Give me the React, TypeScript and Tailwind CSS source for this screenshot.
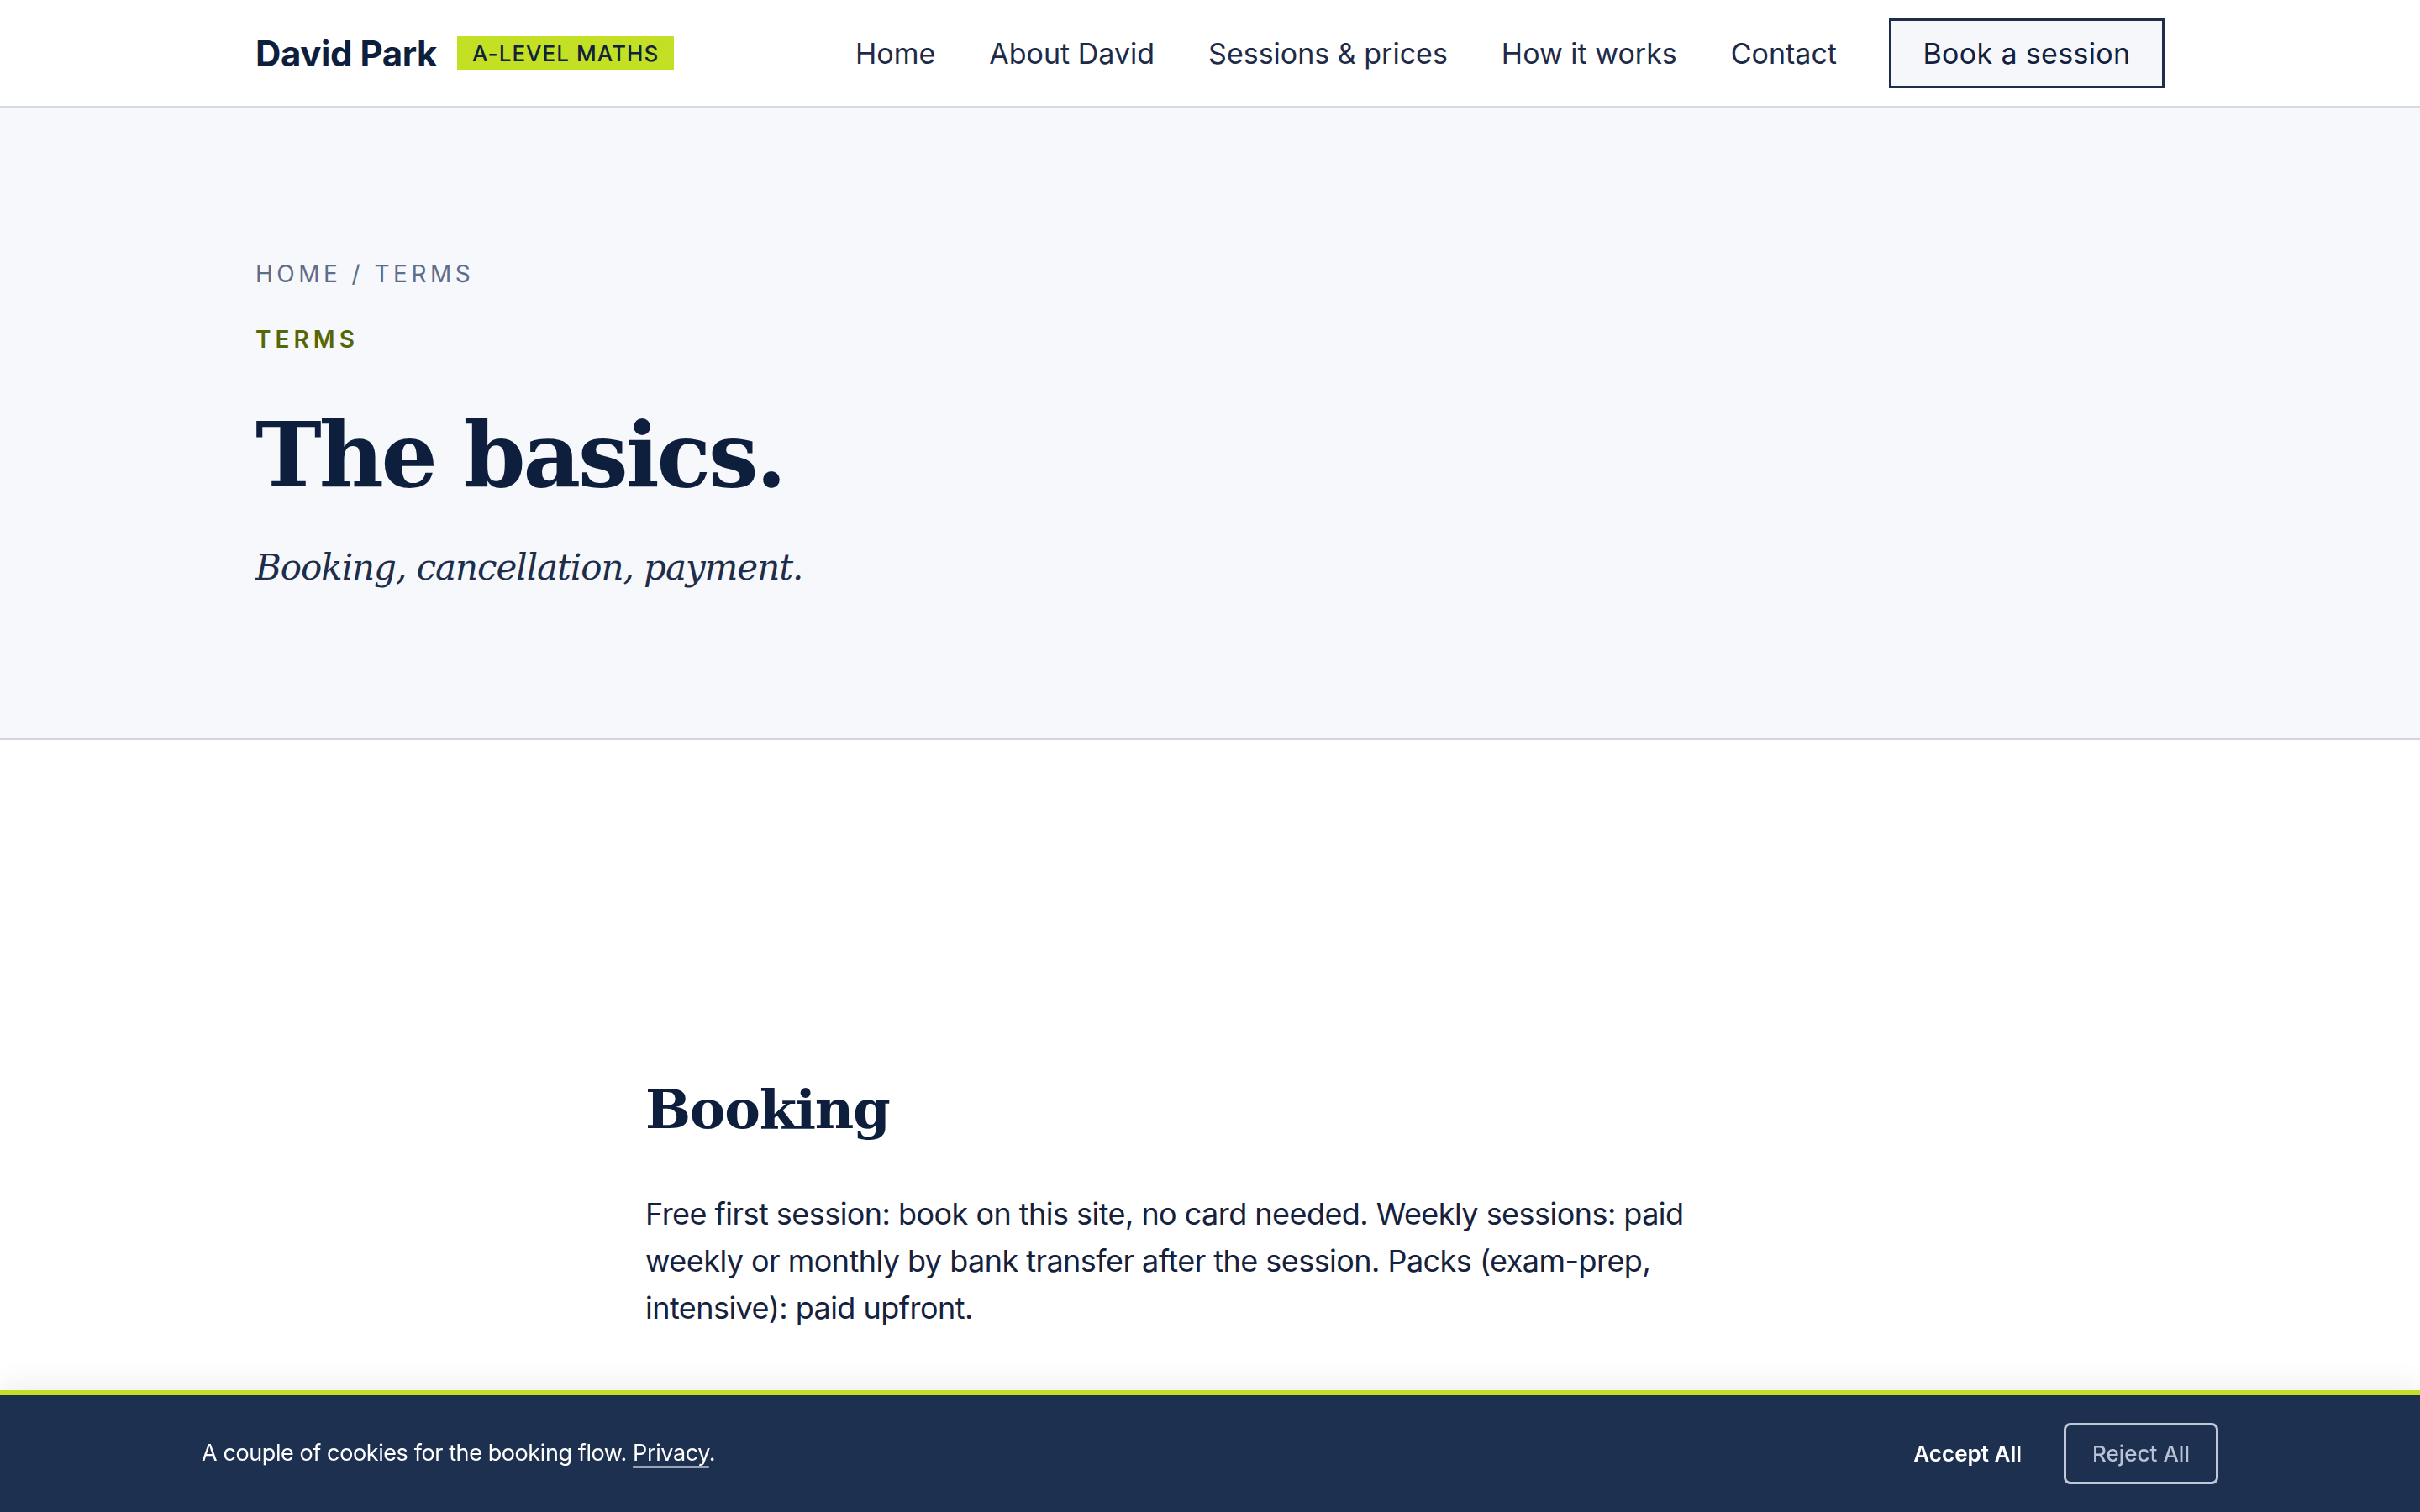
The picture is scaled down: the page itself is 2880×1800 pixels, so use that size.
const sans = { fontFamily: 'Inter, "Noto Sans", sans-serif' };
const slab = { fontFamily: '"DejaVu Serif", "Liberation Serif", serif' };

const navLinks = ['Home', 'About David', 'Sessions & prices', 'How it works', 'Contact'];

function Header() {
  return (
    <header className="h-[128px] border-b-2 border-[#d6dcdc] bg-white">
      <div className="mx-auto flex h-full max-w-[2400px] items-center justify-between px-16">
        <a href="#" className="flex items-center gap-6">
          <span className="text-[42px] font-bold tracking-[-0.01em] text-[#0e1f3d]">David Park</span>
          <span className="flex h-10 items-center bg-[#c3e024] px-[18px] text-[26px] font-medium tracking-[0.04em] text-[#12213d]">
            A-LEVEL MATHS
          </span>
        </a>
        <nav className="flex items-center">
          <ul className="flex items-center gap-[64px] text-[34px] text-[#1e2b48]">
            {navLinks.map((l) => (
              <li key={l}>
                <a href="#">{l}</a>
              </li>
            ))}
          </ul>
          <a
            href="#"
            className="ml-[62px] flex h-[83px] w-[328px] items-center justify-center border-[3px] border-[#1e2d4b] bg-[#f5f7fb] text-[34px] tracking-[0.01em] text-[#12213d]"
          >
            Book a session
          </a>
        </nav>
      </div>
    </header>
  );
}

function Hero() {
  return (
    <section className="border-b-2 border-[#cfd4df] bg-[#f6f8fb]">
      <div className="mx-auto max-w-[2400px] px-16 pb-[174px] pt-[178px]">
        <p className="text-[28px] leading-[40px] tracking-[0.16em] text-[#5d6d8c]">HOME / TERMS</p>
        <p className="mt-[38px] text-[28px] font-semibold leading-[40px] tracking-[0.18em] text-[#56670a]">TERMS</p>
        <h1 className="mt-[60px] text-[106px] font-bold leading-[1.1] tracking-[-0.03em] text-[#0e1f3d]" style={slab}>
          The basics.
        </h1>
        <p className="mt-[46px] text-[42px] italic leading-[1.4] tracking-[-0.025em] text-[#1e2d4b]" style={slab}>
          Booking, cancellation, payment.
        </p>
      </div>
    </section>
  );
}

function Terms() {
  return (
    <main className="bg-white">
      <article className="mx-auto max-w-[1344px] pb-64 pt-[402px]">
        <h2 className="text-[64px] font-bold leading-[1.2] tracking-[-0.02em] text-[#0e1f3d]" style={slab}>
          Booking
        </h2>
        <p className="mt-[57px] text-[36px] leading-[56px] tracking-[-0.015em] text-[#15223d]">
          Free first session: book on this site, no card needed. Weekly sessions: paid weekly or monthly by bank
          transfer after the session. Packs (exam-prep, intensive): paid upfront.
        </p>
      </article>
    </main>
  );
}

function CookieBar() {
  return (
    <div className="fixed inset-x-0 bottom-0 border-t-[6px] border-[#c3e024] bg-[#1d3050] shadow-[0_-10px_28px_rgba(0,0,0,0.06)]">
      <div className="flex h-[139px] items-center justify-between px-[240px]">
        <p className="text-[27px] tracking-[-0.015em] text-white">
          A couple of cookies for the booking flow.{' '}
          <a href="#" className="underline decoration-[#9aa3b5] decoration-[3px] underline-offset-[6px]">
            Privacy
          </a>
          .
        </p>
        <div className="flex items-center gap-[50px]">
          <button className="text-[26px] font-semibold text-white">Accept All</button>
          <button className="h-[73px] w-[184px] rounded-[8px] border-[3px] border-[#c0c8d8] text-[26px] font-medium text-[#b8c2d4]">
            Reject All
          </button>
        </div>
      </div>
    </div>
  );
}

export default function App() {
  return (
    <div className="min-h-screen bg-white" style={sans}>
      <Header />
      <Hero />
      <Terms />
      <CookieBar />
    </div>
  );
}
